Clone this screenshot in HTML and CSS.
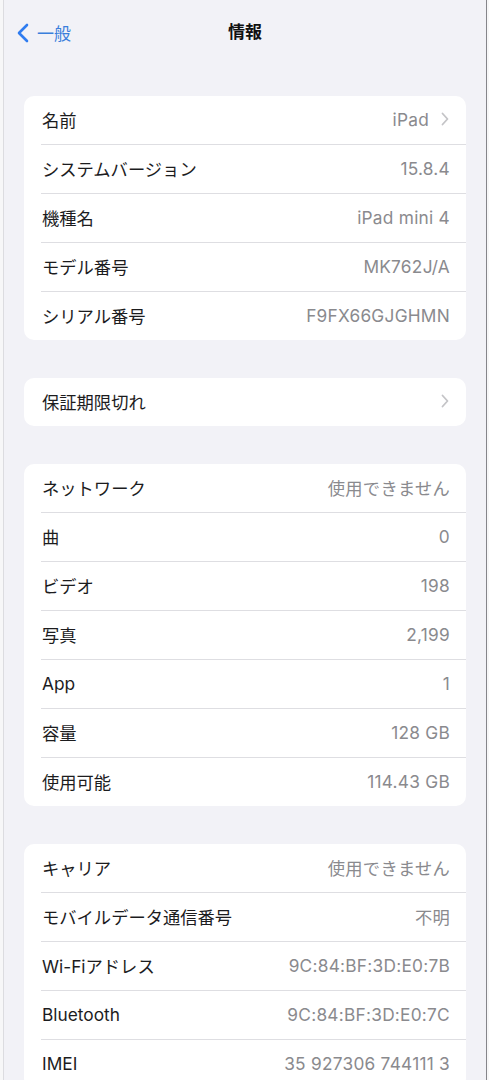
FILE: index.html
```html
<!DOCTYPE html>
<html lang="ja">

<head>
    <meta charset="UTF-8">
    <meta name="viewport" content="width=device-width, initial-scale=1.0">
    <title>情報</title>
    <link rel="stylesheet" href="styles.css">
</head>

<body>
    <div class="screen">
        <header class="navbar">
            <a class="back" href="#">
                <svg class="back-icon" width="14" height="20" viewBox="0 0 14 20">
                    <path d="M11 2 L3 10 L11 18" fill="none" stroke="#2f7cf0" stroke-width="2.6" stroke-linecap="round" stroke-linejoin="round" />
                </svg>
                <span>一般</span>
            </a>
            <h1 class="title">情報</h1>
        </header>

        <main class="content">
            <section class="group">
                <div class="row">
                    <span class="label">名前</span>
                    <span class="value">iPad
                        <svg class="chevron" width="8" height="14" viewBox="0 0 8 14">
                            <path d="M1.5 1.5 L6.5 7 L1.5 12.5" fill="none" stroke="#c4c4c7" stroke-width="1.8" stroke-linecap="round" stroke-linejoin="round" />
                        </svg>
                    </span>
                </div>
                <div class="row">
                    <span class="label">システムバージョン</span>
                    <span class="value">15.8.4</span>
                </div>
                <div class="row">
                    <span class="label">機種名</span>
                    <span class="value">iPad mini 4</span>
                </div>
                <div class="row">
                    <span class="label">モデル番号</span>
                    <span class="value">MK762J/A</span>
                </div>
                <div class="row">
                    <span class="label">シリアル番号</span>
                    <span class="value">F9FX66GJGHMN</span>
                </div>
            </section>

            <section class="group">
                <div class="row">
                    <span class="label">保証期限切れ</span>
                    <span class="value">
                        <svg class="chevron" width="8" height="14" viewBox="0 0 8 14">
                            <path d="M1.5 1.5 L6.5 7 L1.5 12.5" fill="none" stroke="#c4c4c7" stroke-width="1.8" stroke-linecap="round" stroke-linejoin="round" />
                        </svg>
                    </span>
                </div>
            </section>

            <section class="group">
                <div class="row">
                    <span class="label">ネットワーク</span>
                    <span class="value">使用できません</span>
                </div>
                <div class="row">
                    <span class="label">曲</span>
                    <span class="value">0</span>
                </div>
                <div class="row">
                    <span class="label">ビデオ</span>
                    <span class="value">198</span>
                </div>
                <div class="row">
                    <span class="label">写真</span>
                    <span class="value">2,199</span>
                </div>
                <div class="row">
                    <span class="label">App</span>
                    <span class="value">1</span>
                </div>
                <div class="row">
                    <span class="label">容量</span>
                    <span class="value">128 GB</span>
                </div>
                <div class="row">
                    <span class="label">使用可能</span>
                    <span class="value">114.43 GB</span>
                </div>
            </section>

            <section class="group">
                <div class="row">
                    <span class="label">キャリア</span>
                    <span class="value">使用できません</span>
                </div>
                <div class="row">
                    <span class="label">モバイルデータ通信番号</span>
                    <span class="value">不明</span>
                </div>
                <div class="row">
                    <span class="label">Wi-Fiアドレス</span>
                    <span class="value">9C:84:BF:3D:E0:7B</span>
                </div>
                <div class="row">
                    <span class="label">Bluetooth</span>
                    <span class="value">9C:84:BF:3D:E0:7C</span>
                </div>
                <div class="row">
                    <span class="label">IMEI</span>
                    <span class="value">35 927306 744111 3</span>
                </div>
            </section>
        </main>
    </div>
</body>

</html>
```

FILE: styles.css
```css
body {
    margin: 0;
    padding: 0;
    background-color: #f7f7f8;
    font-family: Inter, "Noto Sans CJK JP", sans-serif;
}

.screen {
    width: 482px;
    height: 1080px;
    margin-left: 3px;
    overflow: hidden;
    background-color: #f2f2f7;
    border-left: 1px solid #dcdce0;
    border-right: 1px solid #85858a;
}

.navbar {
    position: relative;
    height: 60px;
    display: flex;
    align-items: center;
    justify-content: center;
}

.back {
    position: absolute;
    left: 12px;
    top: 20px;
    display: flex;
    align-items: center;
    gap: 7px;
    color: #3a7fdc;
    text-decoration: none;
    font-size: 17px;
}

.back-icon {
    display: block;
}

.title {
    margin: 0;
    font-size: 17px;
    font-weight: 700;
    color: #111;
}

.content {
    padding: 36px 20px 0 20px;
}

.group {
    background-color: #fff;
    border-radius: 10px;
    margin-bottom: 38px;
}

.row {
    height: 46px;
    margin-left: 17px;
    padding: 0 16px 2px 1px;
    display: flex;
    align-items: center;
    justify-content: space-between;
    border-bottom: 1px solid #dedee2;
}

.row:last-child {
    border-bottom: none;
}

.label {
    font-size: 17.3px;
    color: #1c1c1e;
}

.value {
    display: flex;
    align-items: center;
    gap: 12px;
    font-size: 17.3px;
    letter-spacing: 0.25px;
    color: #8a8a8e;
}

.chevron {
    display: block;
    margin-right: 1px;
}
```
